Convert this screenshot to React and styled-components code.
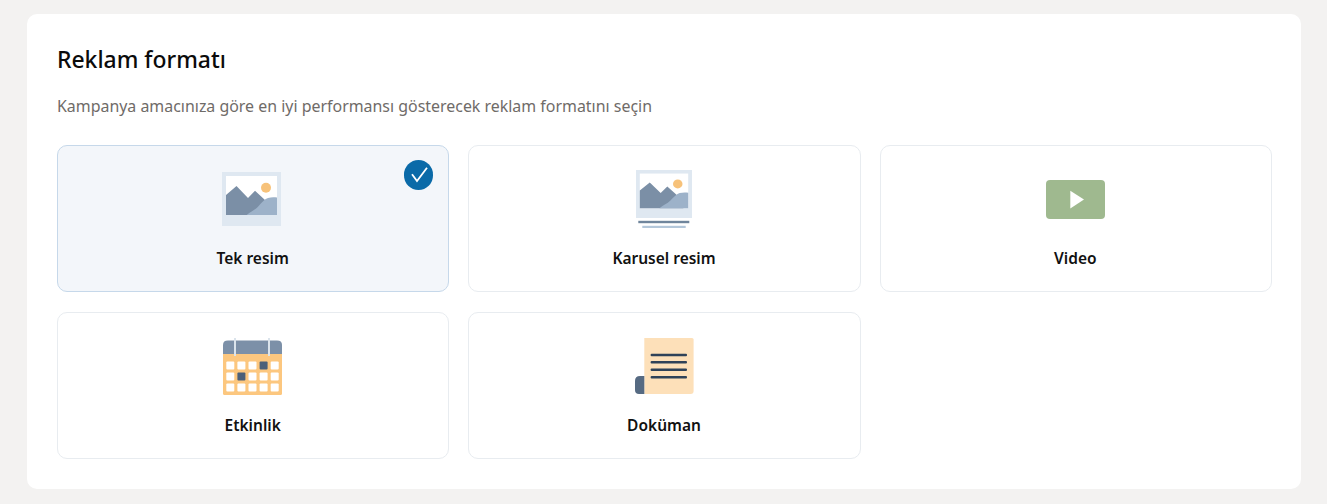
import React from 'react'
import styled, { createGlobalStyle } from 'styled-components'

const Global = createGlobalStyle`
  html, body {
    margin: 0;
    background: #f3f2f1;
    font-family: "Noto Sans", "Open Sans", "Liberation Sans", sans-serif;
  }
`

const Page = styled.div`
  padding: 14px 26px 15px 27px;
`

const Panel = styled.section`
  background: #fff;
  border-radius: 10px;
  padding: 30px 29px 29.5px 30px;
`

const Title = styled.h2`
  margin: 0;
  height: 32px;
  font-size: 22.9px;
  line-height: 32px;
  font-weight: 500;
  color: #0b0b0b;
`

const Subtitle = styled.p`
  margin: 18px 0 0;
  height: 24px;
  font-size: 15.93px;
  line-height: 24px;
  color: #6f6b68;
`

const Grid = styled.div`
  display: grid;
  grid-template-columns: repeat(3, 1fr);
  grid-auto-rows: 147.6px;
  gap: 19.6px 19px;
  margin-top: 26.7px;
`

const Card = styled.div`
  position: relative;
  display: flex;
  flex-direction: column;
  align-items: center;
  border-radius: 10px;
  border: 1px solid ${p => (p.$selected ? '#c6d8ea' : '#e8ecf0')};
  background: ${p => (p.$selected ? '#f3f6fa' : '#fff')};
`

const IconSlot = styled.div`
  height: 100px;
  width: 100%;
  box-sizing: border-box;
  padding-top: 7px;
  display: flex;
  align-items: center;
  justify-content: center;
  & > svg {
    display: block;
  }
`

const Label = styled.div`
  font-size: 15.5px;
  line-height: 24px;
  font-weight: 600;
  color: #111;
  margin-right: 1px;
`

const Check = styled.span`
  position: absolute;
  top: 14.5px;
  right: 15px;
  width: 29.5px;
  height: 29.5px;
  border-radius: 50%;
  background: #0a6aa8;
  display: flex;
  align-items: center;
  justify-content: center;
`

const Picture = () => (
  <>
    <rect x="0" y="0" width="59" height="54" fill="#dfe8f1" />
    <rect x="4" y="4" width="51" height="39" fill="#fff" />
    <circle cx="44" cy="15.700" r="5" fill="#f7c27a" />
    <path d="M4 23 L14.500 14 L26 26 L33 18.700 L43 28 L50 43 L4 43 Z" fill="#7b8fa6" />
    <path d="M24.700 43 C29 39.500 33 38 36 34.700 C40 30 43 27 46 26 C49 25 52 25 55 25.500 L55 43 Z" fill="#9db2c9" />
  </>
)

const SingleIcon = () => (
  <svg width="62" height="54" viewBox="0 0 62 54"><Picture /></svg>
)

const CarouselIcon = () => (
  <svg width="56" height="58" viewBox="0 0 56 58">
    <g transform="scale(0.949 0.889)"><Picture /></g>
    <rect x="2.300" y="50.800" width="51" height="2.400" fill="#6f859c" />
    <rect x="6.300" y="55.800" width="43.400" height="2.200" fill="#b3c7da" />
  </svg>
)

const VideoIcon = () => (
  <svg width="59" height="39" viewBox="0 0 59 39">
    <rect x="0" y="0" width="59" height="39" rx="4" fill="#9fb98f" />
    <path d="M24.300 10.700 L38 19.500 L24.300 28.400 Z" fill="#fff" />
  </svg>
)

const calendarCells = [
  [0, 0], [1, 0], [2, 0], [3, 0, true], [4, 0],
  [0, 1], [1, 1, true], [2, 1], [3, 1], [4, 1],
  [0, 2], [1, 2], [2, 2], [3, 2], [4, 2],
]

const CalendarIcon = () => (
  <svg width="61" height="57" viewBox="0 0 61 57">
    <path d="M0 16 L59 16 L59 55.500 Q59 57 57.500 57 L1.500 57 Q0 57 0 55.500 Z" fill="#fcc77f" />
    <path d="M0 16 L0 7 Q0 2.600 5 2.600 L54 2.600 Q59 2.600 59 7 L59 16 Z" fill="#7c90a8" />
    <rect x="11" y="0" width="2" height="18" fill="#dbe4ec" />
    <rect x="45" y="0" width="2" height="18" fill="#dbe4ec" />
    {calendarCells.map(([c, r, dark]) => (
      <rect
        key={`${c}-${r}`}
        x={3.300 + c * 11.100}
        y={23.500 + r * 11}
        width="8"
        height="8"
        rx="1"
        fill={dark ? '#4c6079' : '#fff'}
      />
    ))}
  </svg>
)

const DocumentIcon = () => (
  <svg width="59" height="57" viewBox="0 0 59 57">
    <path d="M9.300 0 L57 0 Q58.600 0 58.600 1.600 L58.600 53 Q58.600 56 55.600 56 L9.300 56 Z" fill="#fde0b9" />
    <rect x="15.600" y="15.800" width="36.400" height="2.500" rx="1" fill="#2f4258" />
    <rect x="15.600" y="23.100" width="36.400" height="2.500" rx="1" fill="#2f4258" />
    <rect x="15.600" y="30.500" width="36.400" height="2.500" rx="1" fill="#2f4258" />
    <rect x="15.600" y="38.100" width="36.400" height="2.500" rx="1" fill="#2f4258" />
    <path d="M0 43 Q0 38 5 38 L9.300 38 L9.300 56 L4 56 Q0 56 0 52 Z" fill="#566a82" />
  </svg>
)

const formats = [
  { label: 'Tek resim', Icon: SingleIcon, selected: true },
  { label: 'Karusel resim', Icon: CarouselIcon },
  { label: 'Video', Icon: VideoIcon },
  { label: 'Etkinlik', Icon: CalendarIcon },
  { label: 'Doküman', Icon: DocumentIcon },
]

export default function App() {
  return (
    <Page>
      <Global />
      <Panel>
        <Title>Reklam formatı</Title>
        <Subtitle>Kampanya amacınıza göre en iyi performansı gösterecek reklam formatını seçin</Subtitle>
        <Grid>
          {formats.map(({ label, Icon, selected }) => (
            <Card key={label} $selected={selected}>
              {selected && (
                <Check>
                  <svg width="20" height="20" viewBox="0 0 20 20" fill="none">
                    <path d="M3 9.300 L8 16 L18 2.800" stroke="#fff" strokeWidth="1.800" />
                  </svg>
                </Check>
              )}
              <IconSlot><Icon /></IconSlot>
              <Label>{label}</Label>
            </Card>
          ))}
        </Grid>
      </Panel>
    </Page>
  )
}
